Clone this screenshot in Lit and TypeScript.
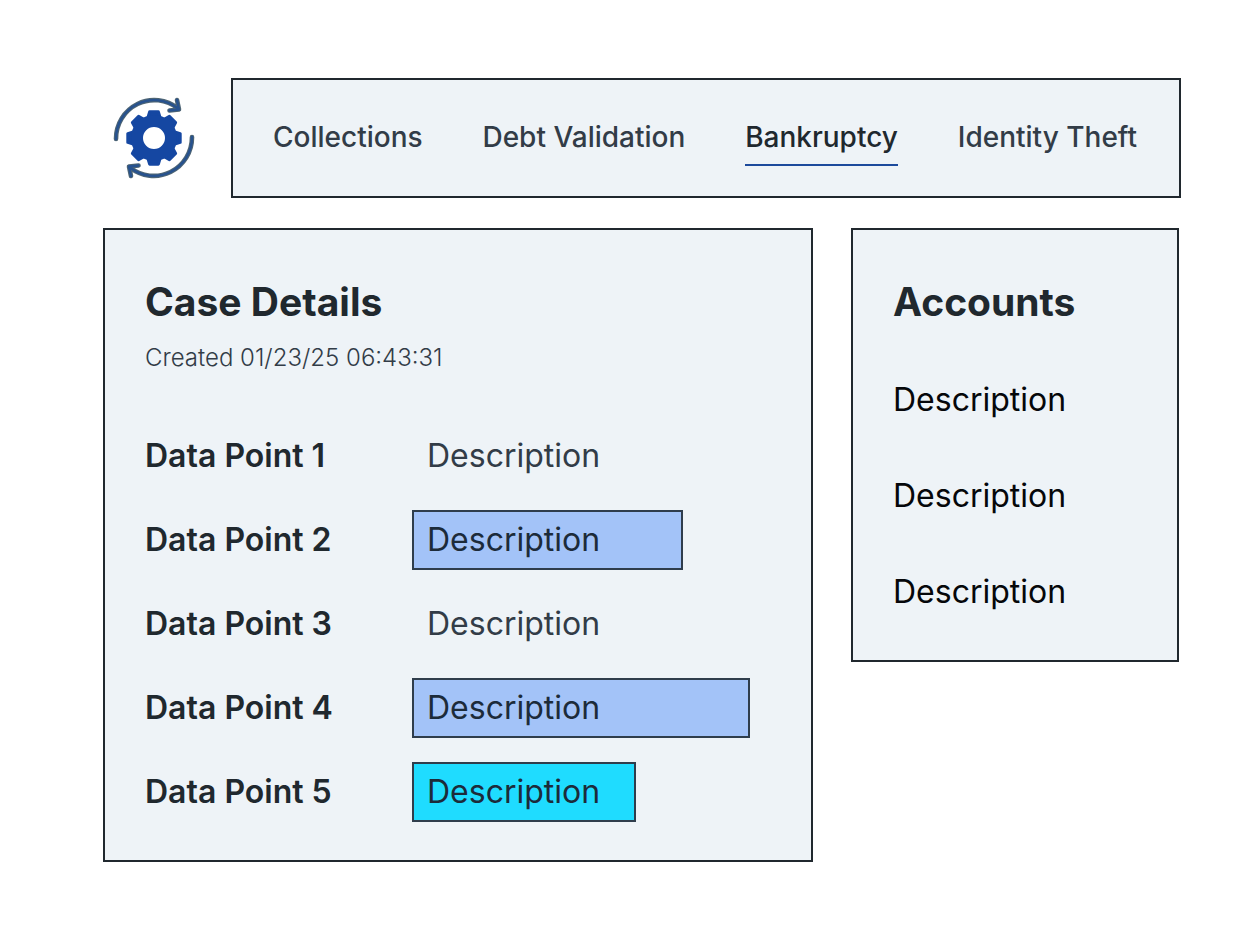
import { LitElement, html, css, svg } from "lit";
import { customElement } from "lit/decorators.js";
import { classMap } from "lit/directives/class-map.js";

@customElement("gear-logo")
class GearLogo extends LitElement {
  static styles = css`
    :host {
      display: block;
    }
    .mark {
      display: block;
      width: 84px;
      height: 84px;
      margin: 0 auto;
    }
    .tooth {
      fill: #1547a2;
      stroke: #1547a2;
      stroke-width: 3;
      stroke-linejoin: round;
    }
    .ring {
      fill: none;
      stroke: #1547a2;
      stroke-width: 12;
    }
    .arrow-edge,
    .arrow {
      fill: none;
      stroke: #4d6474;
      stroke-width: 4.6;
      stroke-linecap: round;
      stroke-linejoin: round;
    }
    .arrow {
      stroke: #27528f;
      stroke-width: 2.4;
    }
  `;

  render() {
    const arrow = "M-38 1 A38.2 38.6 0 0 1 24 -29.5 M23 -38 L25 -28.5 L15.5 -27.5";
    return html`
      <svg class="mark" viewBox="-42 -42 84 84" role="img" aria-label="Automation">
        ${[0, 45, 90, 135, 180, 225, 270, 315].map(
          (a) => svg`<path class="tooth" transform="rotate(${a})" d="M-4.4 -26.2 L4.4 -26.2 L6.2 -20 L-6.2 -20 Z" />`
        )}
        <circle class="ring" r="17" />
        ${[0, 180].map(
          (a) => svg`<g transform="rotate(${a})">
            <path class="arrow-edge" d=${arrow} />
            <path class="arrow" d=${arrow} />
          </g>`
        )}
      </svg>
    `;
  }
}

@customElement("case-tabs")
class CaseTabs extends LitElement {
  static properties = { tabs: { type: Array }, current: { type: String } };
  declare tabs: string[];
  declare current: string;

  static styles = css`
    :host {
      display: block;
    }
    .bar {
      box-sizing: border-box;
      display: flex;
      flex-wrap: wrap;
      align-items: center;
      justify-content: space-between;
      gap: 16px;
      min-height: 120px;
      padding: 0 42px 0 40px;
      border: 2px solid #20282e;
      background: #eef3f7;
    }
    .tab {
      padding: 7px 0 9px;
      border-top: 2px solid transparent;
      border-bottom: 2px solid transparent;
      color: #323c47;
      font-size: 28px;
      font-weight: 500;
      line-height: 36px;
      text-decoration: none;
    }
    .tab.current {
      border-bottom-color: #1c4a9c;
      color: #20282e;
    }
  `;

  render() {
    return html`
      <nav class="bar" aria-label="Case types">
        ${this.tabs.map(
          (t) => html`<a
            href="#"
            class=${classMap({ tab: true, current: t === this.current })}
            aria-current=${t === this.current ? "page" : "false"}
            >${t}</a
          >`
        )}
      </nav>
    `;
  }
}

interface DataPoint {
  label: string;
  value: string;
  tone: string;
}

@customElement("app-root")
class AppRoot extends LitElement {
  static styles = css`
    :host {
      display: block;
      min-height: 100vh;
      background: #ffffff;
      font-family: Inter, "Liberation Sans", sans-serif;
      color: #20282e;
    }
    .page {
      display: flex;
      flex-direction: column;
      gap: 30px;
      padding: 78px 79px 78px 103px;
    }
    .top {
      display: grid;
      grid-template-columns: 102px 1fr;
      align-items: center;
      gap: 26px;
    }
    .content {
      display: grid;
      grid-template-columns: 710fr 328fr;
      align-items: start;
      gap: 38px;
      padding-right: 2px;
    }
    .card {
      padding: 48px 40px 38px;
      border: 2px solid #20282e;
      background: #eef3f7;
    }
    .title {
      margin: 0;
      font-size: 39px;
      font-weight: 700;
      line-height: 48px;
    }
    .created {
      margin: 16px 0 0;
      color: #323c47;
      font-size: 24px;
      font-weight: 300;
      line-height: 32px;
    }
    .points {
      display: grid;
      gap: 24px;
      margin: 52px 0 0;
    }
    .point {
      display: grid;
      grid-template-columns: 267px 1fr;
      align-items: center;
    }
    .label {
      font-size: 32px;
      font-weight: 600;
      line-height: 40px;
    }
    .value {
      box-sizing: border-box;
      margin: 0;
      padding: 8px 13px;
      border: 2px solid transparent;
      color: #323c47;
      font-size: 32px;
      font-weight: 400;
      line-height: 40px;
    }
    .short,
    .medium,
    .long {
      border-color: #2f3d4c;
      background: #a3c3f8;
      color: #1c2b3a;
    }
    .short {
      width: 224px;
      background: #1fdcff;
    }
    .medium {
      width: 271px;
    }
    .long {
      width: 338px;
    }
    .accounts {
      display: grid;
      gap: 56px;
      margin: 0;
      padding: 54px 0 10px;
      list-style: none;
      color: #05070a;
      font-size: 32px;
      font-weight: 400;
      line-height: 40px;
    }
  `;

  private points: DataPoint[] = [
    { label: "Data Point 1", value: "Description", tone: "plain" },
    { label: "Data Point 2", value: "Description", tone: "medium" },
    { label: "Data Point 3", value: "Description", tone: "plain" },
    { label: "Data Point 4", value: "Description", tone: "long" },
    { label: "Data Point 5", value: "Description", tone: "short" },
  ];
  private accounts = ["Description", "Description", "Description"];

  render() {
    return html`
      <div class="page">
        <header class="top">
          <gear-logo></gear-logo>
          <case-tabs
            .tabs=${["Collections", "Debt Validation", "Bankruptcy", "Identity Theft"]}
            .current=${"Bankruptcy"}
          ></case-tabs>
        </header>
        <main class="content">
          <section class="card">
            <h1 class="title">Case Details</h1>
            <p class="created">Created 01/23/25 06:43:31</p>
            <dl class="points">
              ${this.points.map(
                (p) => html`<div class="point">
                  <dt class="label">${p.label}</dt>
                  <dd class="value ${p.tone}">${p.value}</dd>
                </div>`
              )}
            </dl>
          </section>
          <section class="card">
            <h2 class="title">Accounts</h2>
            <ul class="accounts">
              ${this.accounts.map((a) => html`<li>${a}</li>`)}
            </ul>
          </section>
        </main>
      </div>
    `;
  }
}
